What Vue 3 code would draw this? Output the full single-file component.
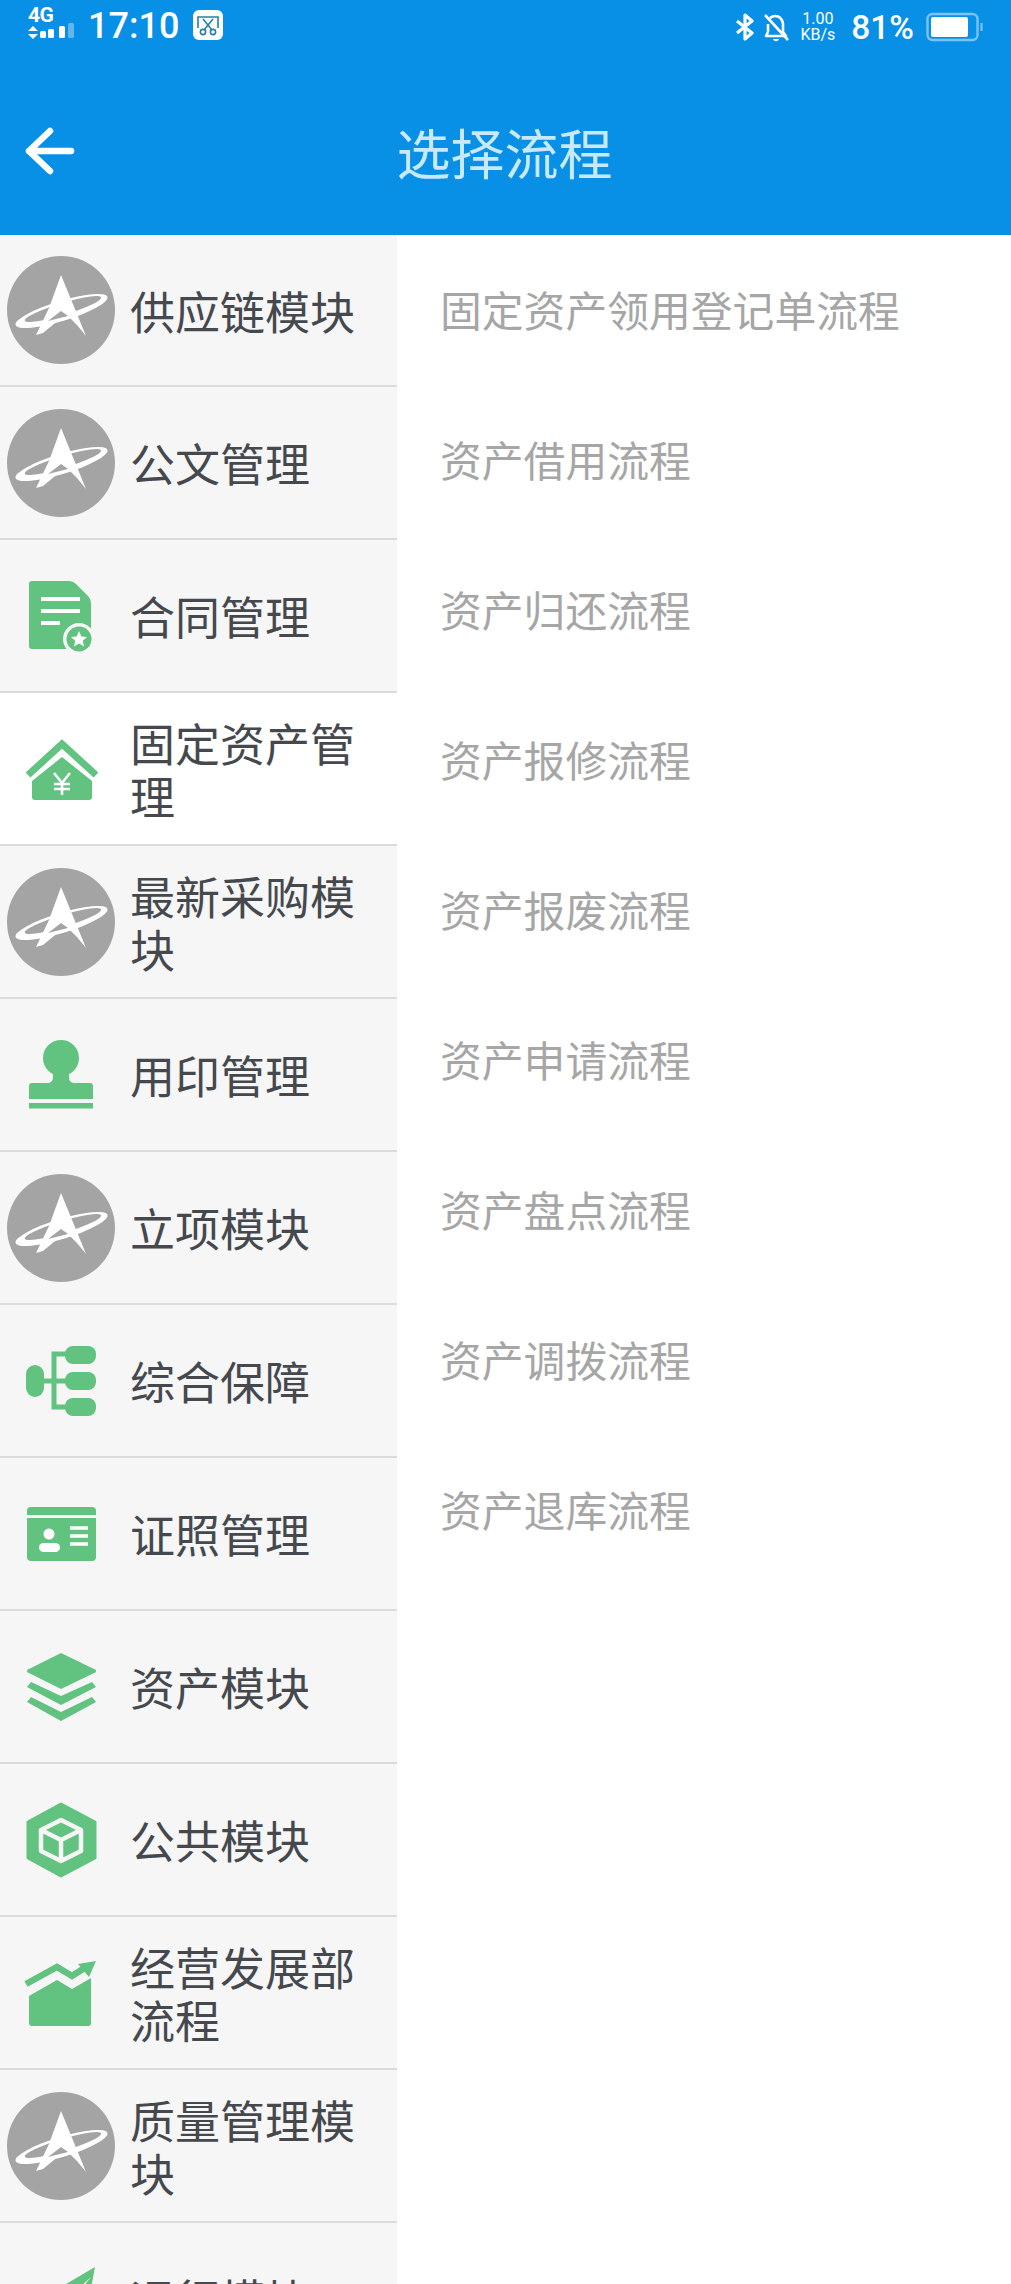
<script setup>
const modules = [
  { name: '供应链模块', icon: 'logo' },
  { name: '公文管理', icon: 'logo' },
  { name: '合同管理', icon: 'doc' },
  { name: '固定资产管理', icon: 'house', active: true },
  { name: '最新采购模块', icon: 'logo' },
  { name: '用印管理', icon: 'stamp' },
  { name: '立项模块', icon: 'logo' },
  { name: '综合保障', icon: 'tree' },
  { name: '证照管理', icon: 'card' },
  { name: '资产模块', icon: 'layers' },
  { name: '公共模块', icon: 'cube' },
  { name: '经营发展部流程', icon: 'chart' },
  { name: '质量管理模块', icon: 'logo' },
  { name: '运行模块', icon: 'plane' }
]

const flows = [
  '固定资产领用登记单流程',
  '资产借用流程',
  '资产归还流程',
  '资产报修流程',
  '资产报废流程',
  '资产申请流程',
  '资产盘点流程',
  '资产调拨流程',
  '资产退库流程'
]
</script>

<template>
  <div class="page">
    <!-- icon sheet, every row points at one of these -->
    <svg class="sheet" aria-hidden="true">
      <symbol id="i-logo" viewBox="0 0 108 108">
        <circle cx="54" cy="54" r="54" fill="#a4a4a4" />
        <ellipse cx="54.5" cy="55" rx="48" ry="10" fill="#fff" transform="rotate(-17 54.5 55)" />
        <ellipse cx="56" cy="53" rx="40" ry="6" fill="#a4a4a4" transform="rotate(-17 56 53)" />
        <path fill="#fff" d="M54 19 L79 80 Q70 68 59 58 L36 77 L29 79 L42 52 Z" />
        <polygon fill="#a4a4a4" points="41,65 54,55 61,60" />
      </symbol>

      <symbol id="i-doc" viewBox="0 0 108 108">
        <g transform="translate(0 1)">
          <path fill="#62c27f" d="M25 18 H62 Q66 18 69 21 L81 33 Q84 36 84 40 V83 a3 3 0 0 1 -3 3 H25 a3 3 0 0 1 -3 -3 V21 a3 3 0 0 1 3 -3 Z" />
          <path stroke="#fff" stroke-width="4" d="M34 36 H73 M34 48 H73 M34 60 H53" />
          <circle cx="72" cy="76" r="16" fill="#f6f6f7" />
          <circle cx="72" cy="76" r="12.5" fill="#62c27f" />
          <polygon fill="#fff" points="72,68 74.4,73.4 80,74 75.8,77.8 77,83.4 72,80.6 67,83.4 68.2,77.8 64,74 69.6,73.4" />
        </g>
      </symbol>

      <symbol id="i-house" viewBox="0 0 108 108">
        <path fill="none" stroke="#62c27f" stroke-width="7" d="M21 60 L55 29 L89 60" />
        <path fill="#62c27f" d="M55 42 L85 66 V82 a3 3 0 0 1 -3 3 H28 a3 3 0 0 1 -3 -3 V66 Z" />
        <path fill="none" stroke="#fff" stroke-width="2.6" d="M47 58 L55 68 L63 58 M55 68 V80 M47 69 H63 M47 74 H63" />
      </symbol>

      <symbol id="i-stamp" viewBox="0 0 108 108">
        <circle cx="54" cy="37" r="18" fill="#62c27f" />
        <path fill="#62c27f" d="M46 48 H62 V56 Q62 62 68 62 H83 a3 3 0 0 1 3 3 V78 H22 V65 a3 3 0 0 1 3 -3 H40 Q46 62 46 56 Z" />
        <rect x="22" y="82" width="64" height="5.5" fill="#62c27f" />
      </symbol>

      <symbol id="i-tree" viewBox="0 0 108 108">
        <path fill="none" stroke="#62c27f" stroke-width="5" d="M30 54 H60 M60 27 H47 V80 H60" />
        <rect x="58" y="19" width="31" height="18" rx="8" fill="#62c27f" />
        <rect x="58" y="45" width="31" height="18" rx="8" fill="#62c27f" />
        <rect x="58" y="71" width="31" height="18" rx="8" fill="#62c27f" />
        <rect x="19" y="38" width="18" height="32" rx="9" fill="#62c27f" />
      </symbol>

      <symbol id="i-card" viewBox="0 0 108 108">
        <path fill="#62c27f" d="M24 27 H85 a4 4 0 0 1 4 4 V35 H20 V31 a4 4 0 0 1 4 -4 Z" />
        <path fill="#62c27f" d="M20 38 H89 V77 a4 4 0 0 1 -4 4 H24 a4 4 0 0 1 -4 -4 Z" />
        <circle cx="42" cy="54" r="5.5" fill="#fff" />
        <rect x="32" y="63" width="21" height="9" rx="4.5" fill="#fff" />
        <path stroke="#fff" stroke-width="3.5" d="M63 48 H81 M63 56 H81 M63 64 H81" />
      </symbol>

      <symbol id="i-layers" viewBox="0 0 108 108">
        <path fill="#62c27f" d="M54 20 L87 36 a2 2 0 0 1 0 4 L54 56 L22 40 a2 2 0 0 1 0 -4 Z" />
        <path fill="#62c27f" d="M24 49 L54 63 L85 49 L89 54 L54 72 L20 54 Z" />
        <path fill="#62c27f" d="M24 64 L54 79 L85 64 L89 69 L54 88 L20 69 Z" />
      </symbol>

      <symbol id="i-cube" viewBox="0 0 108 108">
        <path fill="#62c27f" stroke="#62c27f" stroke-width="3" stroke-linejoin="round" d="M54 18 L88 36 V72 L54 90 L21 72 V36 Z" />
        <path fill="none" stroke="#f6f6f7" stroke-width="4.5" stroke-linejoin="round" d="M54 34 L74 44 V65 L54 75 L34 65 V44 Z M34 44 L54 54 L74 44 M54 54 V75" />
      </symbol>

      <symbol id="i-chart" viewBox="0 0 108 108">
        <path fill="#62c27f" d="M22 57 L50 41 L65 50 L84 39 V84 a3 3 0 0 1 -3 3 H25 a3 3 0 0 1 -3 -3 Z" />
        <path fill="none" stroke="#62c27f" stroke-width="6.5" d="M19 45 L50 28 L65 37 L79 28" />
        <polygon fill="#62c27f" points="89,22 71,25 82,38" />
      </symbol>

      <symbol id="i-plane" viewBox="0 0 108 108">
        <path fill="#62c27f" d="M88 22 L20 62 L42 70 L84 32 L50 74 V92 L62 78 L76 86 Z" />
      </symbol>
    </svg>

    <header class="top">
      <div class="status">
        <div class="signal">
          <span class="net">4G</span>
          <svg class="bars" width="50" height="16" viewBox="0 0 50 16">
            <path fill="#fff" d="M0 5 L5 0 L10 5 Z M0 8 H10 L5 13 Z" />
            <rect x="12" y="5" width="6" height="7" rx="1.5" fill="#fff" />
            <rect x="20" y="3" width="6" height="9" rx="1.5" fill="#fff" />
            <rect x="31" y="0" width="6" height="12" rx="1.5" fill="#fff" />
            <rect x="40" y="-3" width="6" height="15" rx="1.5" fill="#5fb6f1" />
          </svg>
        </div>
        <span class="clock">17:10</span>
        <svg class="shot" width="30" height="30" viewBox="0 0 30 30">
          <rect width="30" height="30" rx="6" fill="#fff" />
          <path fill="none" stroke="#2a7fa8" stroke-width="1.6" d="M5 18 V7 H25 V18 M10 9 L19 20 M20 9 L11 20" />
          <circle cx="10" cy="22" r="2.6" fill="none" stroke="#2a7fa8" stroke-width="1.6" />
          <circle cx="20" cy="22" r="2.6" fill="none" stroke="#2a7fa8" stroke-width="1.6" />
        </svg>

        <div class="status-right">
          <svg width="18" height="28" viewBox="0 0 18 28">
            <path fill="none" stroke="#fff" stroke-width="3.2" stroke-linejoin="round" d="M1 8 L16 20 L9 26 V2 L16 8 L1 20" />
          </svg>
          <svg class="bell" width="26" height="30" viewBox="0 0 26 30">
            <path fill="none" stroke="#fff" stroke-width="2.6" stroke-linejoin="round" d="M5 20 V12 M7 6 C12 2 19 4 20 12 V20 L23 24 H3 L5 20 M2 3 L25 28" />
            <path fill="#fff" d="M10 27 H16 C15 30 11 30 10 27 Z" />
          </svg>
          <div class="speed"><span>1.00</span><span>KB/s</span></div>
          <span class="percent">81%</span>
          <svg class="battery" width="58" height="30" viewBox="0 0 58 30">
            <rect x="1.5" y="2" width="50" height="26" rx="5" fill="none" stroke="#7cc3f3" stroke-width="2.4" />
            <rect x="5" y="5" width="37" height="20" rx="2" fill="#fff" />
            <path fill="none" stroke="#7cc3f3" stroke-width="2.2" d="M55.5 11 V19" />
          </svg>
        </div>
      </div>

      <nav class="bar">
        <svg class="back" width="50" height="48" viewBox="0 0 50 48">
          <path fill="none" stroke="#fff" stroke-width="6.5" stroke-linecap="round" stroke-linejoin="round" d="M4 24 H46 M25 4 L4 24 L25 44" />
        </svg>
        <h1 class="title">选择流程</h1>
      </nav>
    </header>

    <main class="body">
      <ul class="side">
        <li v-for="m in modules" :key="m.name" class="row" :class="{ on: m.active }">
          <svg class="icon"><use :href="'#i-' + m.icon" /></svg>
          <span class="label">{{ m.name }}</span>
        </li>
      </ul>
      <ul class="flows">
        <li v-for="f in flows" :key="f" class="flow">{{ f }}</li>
      </ul>
    </main>
  </div>
</template>

<style>
html,
body {
  margin: 0;
  background: #fff;
}
</style>

<style scoped>
.page {
  width: 1011px;
  height: 100vh;
  overflow: hidden;
  display: flex;
  flex-direction: column;
  background: #fff;
  font-family: "Noto Sans CJK SC", "Noto Sans", sans-serif;
}
.sheet {
  width: 0;
  height: 0;
  position: absolute;
}
.top {
  height: 235px;
  flex: none;
  display: flex;
  flex-direction: column;
  background: #0890e6;
  color: #fff;
}
.status {
  height: 70px;
  box-sizing: border-box;
  padding: 4px 27px 0 28px;
  display: flex;
  align-items: flex-start;
  font-family: Roboto, "Liberation Sans", sans-serif;
}
.signal {
  width: 50px;
  display: flex;
  flex-direction: column;
  margin-top: 3px;
}
.net {
  font-size: 21px;
  font-weight: 700;
  line-height: 17px;
  letter-spacing: -0.5px;
}
.bars {
  margin-top: 2px;
  overflow: visible;
}
.clock {
  margin-left: 10px;
  font-size: 36px;
  line-height: 44px;
  font-weight: 500;
}
.shot {
  margin: 6px 0 0 14px;
}
.status-right {
  margin-left: auto;
  display: flex;
  align-items: center;
  height: 50px;
  margin-top: -2px;
}
.bell {
  margin-left: 9px;
}
.speed {
  margin-left: 11px;
  display: flex;
  flex-direction: column;
  align-items: center;
  font-size: 16px;
  line-height: 16px;
}
.percent {
  margin-left: 16px;
  font-size: 33.5px;
  font-weight: 500;
}
.battery {
  margin-left: 12px;
}
.bar {
  flex: 1;
  position: relative;
  display: flex;
  align-items: center;
  justify-content: center;
}
.back {
  position: absolute;
  left: 25px;
  top: 57px;
}
.title {
  margin: -2px 2px 0 0;
  font-size: 54px;
  font-weight: 400;
  line-height: 70px;
  color: #c8e9fb;
}
.body {
  flex: 1;
  display: flex;
  min-height: 0;
}
.side {
  width: 397px;
  flex: none;
  margin: 0;
  padding: 0;
  list-style: none;
}
.row {
  height: 153px;
  box-sizing: border-box;
  border-bottom: 2px solid #dbdbdb;
  background: #f6f6f7;
  display: flex;
  align-items: center;
  padding-left: 7px;
}
.row:first-child {
  height: 152px;
}
.row.on {
  background: #fff;
}
.icon {
  width: 108px;
  height: 108px;
  flex: none;
}
.label {
  margin-left: 15px;
  width: 250px;
  font-size: 45px;
  line-height: 53px;
  color: #45494e;
}
.flows {
  flex: 1;
  margin: -1px 0 0;
  padding: 0 0 0 43px;
  list-style: none;
}
.flow {
  height: 150px;
  line-height: 150px;
  font-size: 41.8px;
  color: #a6a6a6;
}
</style>
